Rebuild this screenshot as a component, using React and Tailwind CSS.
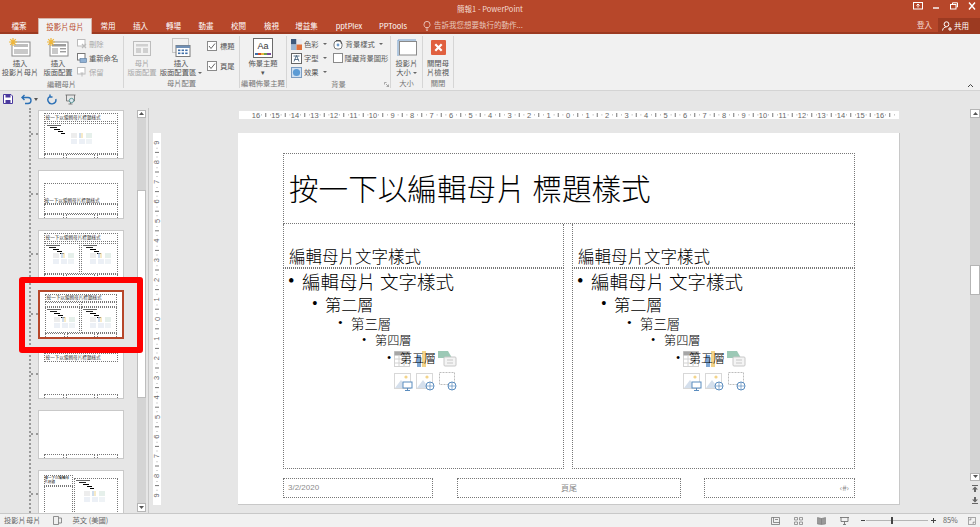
const cjk = { fontFamily: '"Noto Sans CJK TC","Noto Sans",sans-serif' };

const Star = ({ x = 0, y = 0 }) => (
  <g transform={`translate(${x} ${y})`} stroke="#f0b73a" strokeWidth="1.2">
    <path d="M4 0V8M0 4H8M1.2 1.2L6.8 6.8M6.8 1.2L1.2 6.8" />
  </g>
);

const IconSlideMaster = () => (
  <svg width="22" height="20" viewBox="0 0 22 20">
    <rect x="3" y="4" width="18" height="14" fill="#fff" stroke="#8a8a8a" />
    <rect x="5" y="6" width="14" height="3" fill="#bdbdbd" />
    <rect x="5" y="11" width="14" height="5" fill="#c9c9c9" />
    <Star />
  </svg>
);
const IconLayout = () => (
  <svg width="22" height="20" viewBox="0 0 22 20">
    <rect x="3" y="4" width="18" height="14" fill="#fff" stroke="#8a8a8a" />
    <rect x="5" y="6" width="14" height="2.5" fill="#9c9c9c" />
    <rect x="5" y="10" width="6" height="6" fill="#c9c9c9" />
    <rect x="13" y="10" width="6" height="1.4" fill="#9c9c9c" />
    <rect x="13" y="13" width="6" height="1.4" fill="#9c9c9c" />
    <Star />
  </svg>
);
const IconMasterLayout = () => (
  <svg width="20" height="18" viewBox="0 0 20 18">
    <rect x="1.5" y="2.5" width="17" height="14" fill="#f3f3f3" stroke="#bdbdbd" />
    <rect x="4" y="5" width="12" height="2.5" fill="#d0d0d0" />
    <rect x="4" y="9" width="5" height="5" fill="#d0d0d0" />
    <rect x="11" y="9" width="5" height="5" fill="#d0d0d0" />
  </svg>
);
const IconPlaceholder = () => (
  <svg width="20" height="20" viewBox="0 0 20 20">
    <rect x="1.5" y="0.5" width="16" height="14" fill="none" stroke="#9a9a9a" strokeDasharray="1 1" />
    <rect x="5" y="7.5" width="14" height="11" fill="#fff" stroke="#7a7a7a" />
    <rect x="5" y="7.5" width="14" height="2.5" fill="#6f8fb5" />
    <g fill="#3f6ea8">
      <rect x="7" y="11.5" width="2.4" height="1.6" /><rect x="10.6" y="11.5" width="2.4" height="1.6" /><rect x="14.2" y="11.5" width="2.4" height="1.6" />
      <rect x="7" y="14.5" width="2.4" height="1.6" /><rect x="10.6" y="14.5" width="2.4" height="1.6" /><rect x="14.2" y="14.5" width="2.4" height="1.6" />
    </g>
  </svg>
);
const IconTheme = () => (
  <div className="w-[20px] h-[20px] border border-[#6b6b6b] bg-white flex flex-col items-center justify-between pt-[1px]">
    <span className="text-[9px] leading-[12px] text-[#333]" style={{ fontFamily: '"Liberation Sans",sans-serif' }}>Aa</span>
    <svg width="16" height="2" viewBox="0 0 16 2" className="mb-[2px]">
      <rect width="3" height="2" fill="#3f6ea8" /><rect x="3" width="3" height="2" fill="#d04a2a" /><rect x="6" width="3" height="2" fill="#e8b53a" /><rect x="9" width="3" height="2" fill="#6fa04a" /><rect x="12" width="4" height="2" fill="#7a4a9a" />
    </svg>
  </div>
);
const IconSize = () => (
  <svg width="20" height="18" viewBox="0 0 20 18">
    <rect x="2.5" y="2.5" width="17" height="13.5" fill="#fff" stroke="#8a8a8a" />
    <path d="M1 1V17M1 1H19" stroke="#6f9ccb" strokeWidth="1" fill="none" />
  </svg>
);
const IconClose = () => (
  <svg width="15" height="15" viewBox="0 0 15 15">
    <rect width="15" height="15" rx="1" fill="#e0603f" />
    <path d="M4.3 4.3L10.7 10.7M10.7 4.3L4.3 10.7" stroke="#fff" strokeWidth="2.2" />
  </svg>
);

const SmallDelete = ({ dim }) => (
  <svg width="10" height="10" viewBox="0 0 10 10">
    <rect x="0.5" y="0.5" width="7.5" height="6.5" fill="#fff" stroke={dim ? '#bbb' : '#8a8a8a'} />
    <path d="M5 5L9 9M9 5L5 9" stroke={dim ? '#bbb' : '#999'} strokeWidth="1.2" />
  </svg>
);
const SmallRename = () => (
  <svg width="10" height="10" viewBox="0 0 10 10">
    <rect x="0.5" y="0.5" width="7.5" height="6.5" fill="#fff" stroke="#777" />
    <rect x="3" y="5.5" width="6.5" height="4" fill="#8fb0d3" stroke="#55779c" strokeWidth="0.6" />
  </svg>
);
const SmallKeep = () => (
  <svg width="10" height="10" viewBox="0 0 10 10">
    <rect x="0.5" y="0.5" width="7.5" height="6.5" fill="#fff" stroke="#bbb" />
    <path d="M5 9.5V6M3.5 6H6.5" stroke="#bbb" />
  </svg>
);
const SmallColors = () => (
  <svg width="11" height="11" viewBox="0 0 11 11">
    <rect width="5.5" height="5.5" fill="#3e5a7e" /><rect x="5.5" width="5.5" height="5.5" fill="#e8eaf0" />
    <rect y="5.5" width="5.5" height="5.5" fill="#9cb6d3" /><rect x="5.5" y="5.5" width="5.5" height="5.5" fill="#e0703a" />
  </svg>
);
const SmallFonts = () => (
  <svg width="11" height="11" viewBox="0 0 11 11">
    <rect x="0.5" y="0.5" width="10" height="10" fill="#fff" stroke="#666" />
    <path d="M3 8.5L5.5 2.5L8 8.5M2.5 3H8.5M3.5 6.5H7.5" stroke="#35536f" strokeWidth="0.8" fill="none" />
  </svg>
);
const SmallEffects = () => (
  <svg width="11" height="11" viewBox="0 0 11 11">
    <rect x="0.5" y="0.5" width="10" height="10" fill="#cfe0f2" stroke="#7c9cc0" />
    <circle cx="5.5" cy="5.5" r="3.6" fill="#5b9bd5" />
  </svg>
);
const SmallBg = () => (
  <svg width="11" height="11" viewBox="0 0 11 11">
    <rect x="1" y="2" width="8" height="8" fill="#fff" stroke="#777" rx="3" />
    <path d="M3 1.5L7.5 1.5L8.5 5" stroke="#555" fill="none" />
    <circle cx="5" cy="6" r="1.4" fill="#6f9ccb" />
  </svg>
);

const Check = ({ on }) => (
  <span className="w-[10px] h-[10px] border border-[#8a8a8a] bg-white flex items-center justify-center shrink-0">
    {on && (
      <svg width="8" height="8" viewBox="0 0 8 8"><path d="M1 4L3 6.5L7 1.5" fill="none" stroke="#666" strokeWidth="1" /></svg>
    )}
  </span>
);

const Caret = () => <span className="inline-block ml-[2px] align-middle border-x-[2px] border-t-[2px] border-x-transparent border-t-[#666]" />;

function Big({ icon, lines, w, dim, caret }) {
  return (
    <div className="flex flex-col items-center shrink-0" style={{ width: w }}>
      <div className="h-[23px] flex items-center justify-center">{icon}</div>
      <div className={`text-center leading-[9px] whitespace-nowrap ${dim ? 'text-[#a8a8a8]' : 'text-[#555]'}`}>
        {lines.map((l, i) => (
          <div key={l}>{l}{caret && i === lines.length - 1 && <Caret />}</div>
        ))}
      </div>
    </div>
  );
}

function Small({ icon, label, dim, caret }) {
  return (
    <div className={`flex items-center gap-[2px] h-[14px] whitespace-nowrap ${dim ? 'text-[#a8a8a8]' : 'text-[#555]'}`}>
      {icon}
      <span>{label}</span>
      {caret && <Caret />}
    </div>
  );
}

function Group({ w, label, children, launcher }) {
  return (
    <div className="flex flex-col shrink-0 border-r border-[#d6d6d6] my-[2px] h-[52px]" style={{ width: w }}>
      <div className="flex-1 flex items-start">{children}</div>
      <div className="relative h-[10px] text-center leading-[10px] text-[#777] whitespace-nowrap overflow-hidden">
        {label}
        {launcher && (
          <svg width="5" height="5" viewBox="0 0 5 5" className="absolute right-[1px] bottom-[1px]">
            <path d="M0.5 0.5H2.5M0.5 0.5V2.5M2 2L4.5 4.5M4.5 2.5V4.5H2.5" stroke="#777" strokeWidth="0.6" fill="none" />
          </svg>
        )}
      </div>
    </div>
  );
}

const tabs = [
  ['檔案', 38], ['投影片母片', 54, true], ['常用', 32], ['插入', 33], ['轉場', 33], ['動畫', 32], ['校閱', 33], ['檢視', 33], ['增益集', 37], ['pptPlex', 48], ['PPTools', 40],
];

function TitleBar() {
  return (
    <header className="shrink-0 bg-[#b7472a] text-white text-[7.5px]">
      <div className="relative h-[18px] flex items-center justify-center">
        <span className="text-[#f4dcd4] leading-none">簡報1 - PowerPoint</span>
        <div className="absolute right-[3px] top-[2px] flex items-center gap-[8px]">
          <svg width="10" height="8" viewBox="0 0 10 8"><rect x="0.5" y="0.5" width="9" height="6.5" fill="none" stroke="#fff" /><path d="M5 2V5.5M3.5 3.5L5 2L6.5 3.5" stroke="#fff" fill="none" /></svg>
          <svg width="10" height="8" viewBox="0 0 10 8"><path d="M2 6H8" stroke="#fff" strokeWidth="1.4" /></svg>
          <svg width="10" height="8" viewBox="0 0 10 8"><rect x="1.5" y="2.5" width="5.5" height="4.5" fill="none" stroke="#fff" /><path d="M3.5 2V0.8H8.5V5H7.5" stroke="#fff" fill="none" /></svg>
          <svg width="10" height="8" viewBox="0 0 10 8"><path d="M2 0.5L8 7.5M8 0.5L2 7.5" stroke="#fff" strokeWidth="1.4" /></svg>
        </div>
      </div>
      <div className="h-[16px] flex items-stretch border-b-[2px] border-[#9c3a21]">
        {tabs.map(([t, w, active]) => (
          <div key={t} style={{ width: w }} className={`shrink-0 flex items-center justify-center whitespace-nowrap -mb-[2px] ${active ? 'bg-[#f1f1f1] text-[#b7472a] border-t border-x border-[#d6b3a8]' : ''}`}>{t}</div>
        ))}
        <div className="flex items-center gap-[3px] text-[#e8c7bc] ml-[10px]">
          <svg width="8" height="11" viewBox="0 0 8 11"><path d="M2.5 7.5C1.5 6.6 1 5.7 1 4.4A3 3 0 0 1 7 4.4C7 5.7 6.5 6.6 5.5 7.5ZM2.8 9H5.2M3.2 10.4H4.8" fill="none" stroke="#f4dcd4" strokeWidth="0.8" /></svg>
          <span>告訴我您想要執行的動作...</span>
        </div>
        <div className="flex-1" />
        <div className="flex items-center pr-[6px] text-[#f4dcd4]">登入</div>
        <div className="w-[42px] bg-[#9c3a21] flex items-center pl-[4px] gap-[2px] -mb-[2px]">
          <svg width="10" height="10" viewBox="0 0 10 10"><circle cx="4.5" cy="3.2" r="2.4" fill="none" stroke="#fff" /><path d="M0.5 9.5C1 6.5 3 6 4.5 6M6 8H10M8 6V10" stroke="#fff" fill="none" /></svg>
          <span>共用</span>
        </div>
      </div>
    </header>
  );
}

function Ribbon() {
  return (
    <section className="relative shrink-0 h-[56.5px] bg-[#f1f1f1] border-b border-[#d4d4d4] flex items-start text-[7.3px]">
      <Group w={124} label="編輯母片">
        <Big w={40} icon={<IconSlideMaster />} lines={['插入', '投影片母片']} />
        <Big w={36} icon={<IconLayout />} lines={['插入', '版面配置']} />
        <div className="pt-[1px] ml-[1px]">
          <Small dim icon={<SmallDelete dim />} label="刪除" />
          <Small icon={<SmallRename />} label="重新命名" />
          <Small dim icon={<SmallKeep />} label="保留" />
        </div>
      </Group>
      <Group w={116} label="母片配置">
        <Big w={36} dim icon={<IconMasterLayout />} lines={['母片', '版面配置']} />
        <Big w={42} caret icon={<IconPlaceholder />} lines={['插入', '版面配置區']} />
        <div className="pl-[5px] pt-[5px] flex flex-col gap-[9px] text-[#555]">
          <div className="flex items-center gap-[3px]"><Check on /><span>標題</span></div>
          <div className="flex items-center gap-[3px]"><Check on /><span>頁尾</span></div>
        </div>
      </Group>
      <Group w={47} label="編輯佈景主題">
        <Big w={46} icon={<IconTheme />} lines={['佈景主題', '▾']} />
      </Group>
      <Group w={104} label="背景" launcher>
        <div className="pl-[4px] pt-[1px]">
          <Small icon={<SmallColors />} label="色彩" caret />
          <Small icon={<SmallFonts />} label="字型" caret />
          <Small icon={<SmallEffects />} label="效果" caret />
        </div>
        <div className="pl-[6px] pt-[1px]">
          <Small icon={<SmallBg />} label="背景樣式" caret />
          <Small icon={<Check />} label="隱藏背景圖形" />
        </div>
      </Group>
      <Group w={32} label="大小">
        <Big w={31} caret icon={<IconSize />} lines={['投影片', '大小']} />
      </Group>
      <Group w={31} label="關閉">
        <Big w={30} icon={<IconClose />} lines={['關閉母', '片檢視']} />
      </Group>
      <svg width="7" height="5" viewBox="0 0 7 5" className="absolute right-[6px] bottom-[2px]"><path d="M1 4L3.5 1.5L6 4" fill="none" stroke="#444" strokeWidth="1" /></svg>
    </section>
  );
}

function Qat() {
  return (
    <div className="shrink-0 h-[17px] bg-[#e6e6e6] flex items-center pl-[3px]">
      <svg width="10" height="10" viewBox="0 0 10 10"><path d="M0.5 0.5H8L9.5 2V9.5H0.5Z" fill="#fff" stroke="#4b3a9e" /><rect x="2.5" y="0.5" width="5" height="3" fill="#4b3a9e" /><rect x="2.5" y="6" width="5" height="3.5" fill="#4b3a9e" /></svg>
      <svg width="11" height="11" viewBox="0 0 11 11" className="ml-[8px]"><path d="M1 3.5H7A3 3 0 0 1 7 9.5H4M3.5 1L1 3.5L3.5 6" fill="none" stroke="#2a6fb5" strokeWidth="1.4" /></svg>
      <svg width="4" height="3" viewBox="0 0 4 3" className="ml-[2px]"><path d="M0 0H4L2 3Z" fill="#555" /></svg>
      <svg width="10" height="11" viewBox="0 0 10 11" className="ml-[9px]"><path d="M3 2.3A4 4 0 1 0 8.8 5M3 0.5V3H5.5" fill="none" stroke="#2a6fb5" strokeWidth="1.4" /></svg>
      <svg width="11" height="11" viewBox="0 0 11 11" className="ml-[8px]"><path d="M0.5 1H10.5M1.5 1V7H9.5V1M5.5 7V10M3.5 10H7.5" fill="none" stroke="#666" strokeWidth="0.8" /><circle cx="6.5" cy="6.5" r="2.2" fill="#dfe7ee" stroke="#2f7f7f" strokeWidth="0.7" /></svg>
    </div>
  );
}

const Tri = ({ down }) => (
  <svg width="5" height="3" viewBox="0 0 5 3"><path d={down ? 'M0 0H5L2.5 3Z' : 'M0 3H5L2.5 0Z'} fill="#555" /></svg>
);
const ScrollBtn = ({ down, h = 8 }) => (
  <div className="shrink-0 bg-white border border-[#b5b5b5] flex items-center justify-center" style={{ height: h }}><Tri down={down} /></div>
);

const MiniCascade = () => (
  <div className="flex flex-col gap-[1px] pt-[1px]">
    <div className="h-[1px] w-[14px] ml-[1px] bg-[#666]" />
    <div className="h-[1px] w-[7px] ml-[4px] bg-[#222]" />
    <div className="h-[1px] w-[6px] ml-[8px] bg-black" />
    <div className="h-[1px] w-[5px] ml-[12px] bg-black" />
    <div className="h-[1px] w-[4px] ml-[15px] bg-black" />
  </div>
);
const MiniIcons = ({ className = '' }) => (
  <svg width="22" height="11" viewBox="0 0 22 11" className={`opacity-70 ${className}`}>
    <rect x="0" y="0" width="6" height="5" fill="#e6e6e6" /><rect x="8" y="0" width="2" height="5" fill="#bcd0e6" /><rect x="10" y="0" width="2" height="5" fill="#f5e2b0" /><rect x="15" y="0" width="6" height="5" fill="#dcebe3" />
    <rect x="0" y="6" width="6" height="5" fill="#e4ebf3" /><rect x="8" y="6" width="6" height="5" fill="#e4ebf3" /><rect x="15" y="6" width="6" height="5" fill="#e9eef3" />
  </svg>
);
const dot = 'border border-dotted border-[#777]';

const MiniTitle = ({ h = 9 }) => (
  <div className={`${dot} shrink-0 flex items-center text-[4.6px] leading-none text-[#333] whitespace-nowrap overflow-hidden pl-[1px]`} style={{ height: h }}>按一下以編輯母片標題樣式</div>
);
const MiniFoot = () => (
  <div className="shrink-0 h-[4px] grid grid-cols-[1fr_1.4fr_1fr] gap-[2px]">
    <div className={`${dot} border-b-0`} /><div className={`${dot} border-b-0`} /><div className={`${dot} border-b-0`} />
  </div>
);
const MiniContent = () => (
  <div className={`${dot} flex-1 min-w-0 overflow-hidden px-[1px] relative`}>
    <MiniCascade />
    <MiniIcons className="absolute left-[26px] top-[9px]" />
  </div>
);
const MiniTwo = () => (
  <div className={`${dot} flex-1 min-w-0 overflow-hidden relative`}>
    <MiniCascade />
    <MiniIcons className="absolute left-[8px] top-[9px]" />
  </div>
);

function Thumb({ selected, children }) {
  return (
    <div className="flex items-center">
      <div className="w-[7px] border-t-2 border-dotted border-[#999]" />
      <div className={`w-[86px] h-[49px] shrink-0 bg-white flex flex-col overflow-hidden px-[5px] pt-[2px] ${selected ? 'border-2 border-[#b7472a]' : 'border border-[#c9c9c9]'}`}>
        {children}
      </div>
    </div>
  );
}

function Thumbs() {
  return (
    <aside className="relative w-[149px] shrink-0 flex border-r border-[#c8c8c8] pl-[29px] pr-[2px]">
      <div className="w-[95px] border-l-2 border-dotted border-[#999] flex flex-col gap-[11px] pt-[2px] overflow-hidden">
        <Thumb>
          <MiniTitle />
          <div className="flex-1 min-h-0 flex mt-[1px]"><MiniContent /></div>
          <MiniFoot />
        </Thumb>
        <Thumb>
          <div className="h-[10px] shrink-0" />
          <div className={`${dot} h-[21px] shrink-0 flex items-end text-[4.6px] leading-[6px] text-[#333] whitespace-nowrap`}>按一下以編輯母片標題樣式</div>
          <div className={`${dot} flex-1 min-h-0`} />
          <MiniFoot />
        </Thumb>
        <Thumb>
          <MiniTitle />
          <div className="flex-1 min-h-0 flex gap-[1px] mt-[1px]"><MiniTwo /><MiniTwo /></div>
          <MiniFoot />
        </Thumb>
        <Thumb selected>
          <MiniTitle h={8} />
          <div className="flex gap-[1px]">
            <div className={`${dot} flex-1 h-[5px]`} /><div className={`${dot} flex-1 h-[5px]`} />
          </div>
          <div className="flex-1 min-h-0 flex gap-[1px]"><MiniTwo /><MiniTwo /></div>
          <MiniFoot />
        </Thumb>
        <Thumb>
          <MiniTitle />
          <div className="flex-1" />
          <MiniFoot />
        </Thumb>
        <Thumb>
          <div className="flex-1" />
          <MiniFoot />
        </Thumb>
        <Thumb>
          <div className="flex gap-[1px] flex-1 pt-[2px]">
            <div className="w-[29px] flex flex-col">
              <div className={`${dot} h-[11px] text-[3.5px] leading-[4px]`}>按一下以編輯母片標題</div>
              <div className={`${dot} flex-1`} />
            </div>
            <div className={`${dot} flex-1 mt-[3px] relative overflow-hidden`}>
              <MiniCascade />
              <MiniIcons className="absolute left-[9px] top-[12px]" />
            </div>
          </div>
        </Thumb>
      </div>
      <div className="ml-[13px] w-[9.5px] flex flex-col pt-[2px] pb-[1px]">
        <ScrollBtn />
        <div className="h-[72px] bg-[#d4d4d4]" />
        <div className="h-[208px] bg-white border border-[#bdbdbd]" />
        <div className="flex-1 bg-[#d4d4d4]" />
        <ScrollBtn down h={9} />
      </div>
      <div className="absolute left-[19px] top-[169px] w-[124px] h-[76px] border-[6px] border-[#ff0000] rounded-[3px]" />
    </aside>
  );
}

const range = Array.from({ length: 33 }, (_, i) => i - 16);

function HRuler() {
  const c = 329;
  return (
    <svg width="660" height="8" viewBox="0 0 660 8" className="block bg-white shrink-0">
      {range.map((n) => (
        <text key={n} x={c + n * 19.5} y="6.5" textAnchor="middle" fontSize="7.5" fill="#666" fontFamily="Liberation Sans, sans-serif">{Math.abs(n)}</text>
      ))}
      {range.map((n) => (
        <g key={n} fill="#777">
          <rect x={c + n * 19.5 + 9.25} y="2" width="1" height="4" />
          <rect x={c + n * 19.5 + 5.2} y="3.5" width="0.8" height="0.8" />
          <rect x={c + n * 19.5 + 14} y="3.5" width="0.8" height="0.8" />
        </g>
      ))}
    </svg>
  );
}

const vrange = Array.from({ length: 19 }, (_, i) => i - 9);
function VRuler() {
  const c = 186;
  return (
    <svg width="8" height="372" viewBox="0 0 8 372" className="block bg-white shrink-0">
      {vrange.map((n) => (
        <text key={n} x="4" y={c + n * 19.6} textAnchor="middle" dominantBaseline="central" fontSize="7.5" fill="#666" fontFamily="Liberation Sans, sans-serif" transform={`rotate(-90 4 ${c + n * 19.6})`}>{Math.abs(n)}</text>
      ))}
      {vrange.slice(0, 18).map((n) => (
        <g key={n} fill="#777">
          <rect x="2" y={c + n * 19.6 + 9.3} width="4" height="1" />
          <rect x="3.6" y={c + n * 19.6 + 5.2} width="0.8" height="0.8" />
          <rect x="3.6" y={c + n * 19.6 + 14} width="0.8" height="0.8" />
        </g>
      ))}
    </svg>
  );
}

const levels = [
  { t: '編輯母片 文字樣式', pl: 4, bw: 14, h: 24, fs: 18.5 },
  { t: '第二層', pl: 28, bw: 13, h: 22, fs: 16.2 },
  { t: '第三層', pl: 54, bw: 13, h: 16, fs: 13.4 },
  { t: '第四層', pl: 78, bw: 13, h: 18, fs: 12.2 },
  { t: '第五層', pl: 103, bw: 13, h: 16, fs: 12 },
];

const PlaceholderIcons = () => (
  <svg width="63" height="41" viewBox="0 0 63 41" className="absolute left-[110px] top-[81px]">
    <g>
      <rect x="0.5" y="1.5" width="15" height="15" fill="#fff" stroke="#d2d2d2" />
      <rect x="0.5" y="1.5" width="15" height="4" fill="#a6a6a6" />
      <path d="M0 9H15M0 13H15M5 5V16M10 5V16" stroke="#d2d2d2" />
    </g>
    <g>
      <rect x="23" y="5" width="4" height="12" fill="#7ea6d3" />
      <rect x="28" y="1" width="4" height="16" fill="#f3d48a" />
    </g>
    <g>
      <path d="M44 1H54L58 8H44Z" fill="#9cc9b6" />
      <rect x="50" y="7" width="12" height="9" rx="1" fill="#f4f4f4" stroke="#c8c8c8" />
      <path d="M53 10H59M53 13H59" stroke="#c8c8c8" />
    </g>
    <g>
      <rect x="0.5" y="23.5" width="16" height="15" fill="#fff" stroke="#d8d8d8" />
      <path d="M1 38L7 30L13 38Z" fill="#d4dfec" />
      <circle cx="12" cy="27" r="1.6" fill="#f3d48a" />
      <rect x="9" y="32" width="9" height="6" fill="#fff" stroke="#5b8dbf" />
      <path d="M13.5 38V40M11 40.5H16" stroke="#5b8dbf" />
    </g>
    <g>
      <rect x="22.5" y="23.5" width="16" height="15" fill="#fff" stroke="#d8d8d8" />
      <path d="M23 38L29 30L35 38Z" fill="#d4dfec" />
      <circle cx="33" cy="27" r="1.6" fill="#f3d48a" />
      <circle cx="36" cy="36" r="4" fill="#fff" stroke="#5b8dbf" />
      <path d="M32 36H40M36 32V40" stroke="#5b8dbf" strokeWidth="0.7" />
    </g>
    <g>
      <rect x="45.5" y="22.5" width="15" height="12" fill="#fff" stroke="#bdbdbd" strokeDasharray="2 1" />
      <circle cx="58" cy="36" r="4" fill="#fff" stroke="#5b8dbf" />
      <path d="M54 36H62M58 32V40" stroke="#5b8dbf" strokeWidth="0.7" />
    </g>
  </svg>
);

function Column({ w }) {
  return (
    <div className="flex flex-col" style={{ width: w }}>
      <div className={`${dot} border-t-0 h-[44px] flex items-end pl-[5px] text-[16.5px] leading-[21px] font-light text-black`}>編輯母片文字樣式</div>
      <div className={`${dot} h-[201px] relative pt-[1px]`}>
        <PlaceholderIcons />
        {levels.map((l) => (
          <div key={l.t} className="relative flex items-center whitespace-nowrap font-light text-black" style={{ paddingLeft: l.pl, height: l.h, fontSize: l.fs }}>
            <span className="shrink-0" style={{ width: l.bw, fontFamily: '"Liberation Serif",serif' }}>•</span>
            <span>{l.t}</span>
          </div>
        ))}
      </div>
    </div>
  );
}

function Slide() {
  return (
    <div className="w-[662px] h-[372px] bg-white border-r border-b border-[#c8c8c8] pt-[20px] pl-[45px] flex flex-col shrink-0">
      <div className={`${dot} w-[572px] h-[71px] flex items-center pl-[5px] pb-[1px] text-[29.6px] font-light text-black leading-none`}>按一下以編輯母片 標題樣式</div>
      <div className="flex gap-[8px]">
        <Column w={281} />
        <Column w={283} />
      </div>
      <div className="flex mt-[9px] text-[8px] text-[#8b8b8b]">
        <div className={`${dot} w-[150px] h-[20px] flex items-center pl-[4px]`} style={{ fontFamily: '"Liberation Sans",sans-serif' }}>3/2/2020</div>
        <div className={`${dot} w-[224px] ml-[24px] h-[20px] flex items-center justify-center`}>頁尾</div>
        <div className={`${dot} w-[151px] ml-[23px] h-[20px] flex items-center justify-end pr-[5px]`}>‹#›</div>
      </div>
    </div>
  );
}

function RightBar() {
  return (
    <div className="w-[10px] shrink-0 flex flex-col pt-[1px]">
      <ScrollBtn h={9} />
      <div className="h-[147px] bg-[#d4d4d4]" />
      <div className="h-[30px] bg-white border border-[#b5b5b5]" />
      <div className="h-[178px] bg-[#d4d4d4]" />
      <ScrollBtn down h={8} />
      <div className="flex flex-col items-center gap-[5px] pt-[4px]">
        <svg width="6" height="7" viewBox="0 0 6 7"><path d="M0 0H6V1H0ZM3 1.5L6 4.5H0ZM2 4.5H4V7H2Z" fill="#666" /></svg>
        <svg width="6" height="7" viewBox="0 0 6 7"><path d="M0 7H6V6H0ZM3 5.5L6 2.5H0ZM2 2.5H4V0H2Z" fill="#666" /></svg>
      </div>
    </div>
  );
}

function StatusBar() {
  return (
    <footer className="shrink-0 h-[14px] bg-[#f1f1f1] border-t border-[#c8c8c8] flex items-center text-[7.3px] text-[#666] pl-[4px]">
      <span>投影片母片</span>
      <svg width="9" height="9" viewBox="0 0 9 9" className="ml-[13px]"><path d="M0.5 0.5H5.5V8.5H0.5ZM5.5 2H8.5V7H5.5" fill="none" stroke="#777" strokeWidth="0.8" /></svg>
      <span className="ml-[10px]">英文 (美國)</span>
      <div className="flex-1" />
      <svg width="9" height="8" viewBox="0 0 9 8"><path d="M0.5 0.5H8.5V7.5H0.5ZM2.5 0.5V5.5H8.5M4 2.5H7" fill="none" stroke="#666" strokeWidth="0.7" /></svg>
      <svg width="9" height="8" viewBox="0 0 9 8" className="ml-[14px]"><path d="M0.5 0.5H3.5V3H0.5ZM5.5 0.5H8.5V3H5.5ZM0.5 5H3.5V7.5H0.5ZM5.5 5H8.5V7.5H5.5Z" fill="none" stroke="#777" strokeWidth="0.7" /></svg>
      <svg width="9" height="8" viewBox="0 0 9 8" className="ml-[14px]"><path d="M4.5 1.5V7.5M0.5 0.5L4.5 1.5L8.5 0.5V7L4.5 7.5L0.5 7Z" fill="#999" stroke="#777" strokeWidth="0.6" /></svg>
      <svg width="9" height="8" viewBox="0 0 9 8" className="ml-[14px]"><path d="M0 0.5H9M1 0.5V4.5H8V0.5M4.5 4.5V7.5M3 7.5H6" fill="none" stroke="#666" strokeWidth="0.8" /></svg>
      <span className="ml-[12px] w-[4px] h-[1px] bg-[#444]" />
      <div className="relative ml-[1px] w-[62px] h-[1px] bg-[#b5b5b5]">
        <span className="absolute left-[25px] -top-[3px] w-[2px] h-[7px] bg-[#444]" />
      </div>
      <svg width="5" height="5" viewBox="0 0 5 5" className="ml-[3px]"><path d="M0 2.5H5M2.5 0V5" stroke="#444" /></svg>
      <span className="ml-[7px] w-[16px]">85%</span>
      <svg width="8" height="8" viewBox="0 0 8 8" className="ml-[9px] mr-[4px]"><rect x="0.5" y="0.5" width="7" height="7" fill="none" stroke="#888" strokeWidth="0.7" /><path d="M2 2H3.5M2 2V3.5M6 6H4.5M6 6V4.5" stroke="#666" strokeWidth="0.7" fill="none" /></svg>
    </footer>
  );
}

export default function App() {
  return (
    <div className="w-[980px] h-[527px] overflow-hidden flex flex-col bg-[#e6e6e6]" style={cjk}>
      <TitleBar />
      <Ribbon />
      <Qat />
      <main className="flex-1 min-h-0 flex">
        <Thumbs />
        <div className="flex-1 min-w-0 pt-[3px]">
          <div className="pl-[90px]"><HRuler /></div>
          <div className="flex pl-[4px] mt-[14px]">
            <VRuler />
            <div className="w-[77px] shrink-0" />
            <Slide />
          </div>
        </div>
        <RightBar />
      </main>
      <StatusBar />
    </div>
  );
}
